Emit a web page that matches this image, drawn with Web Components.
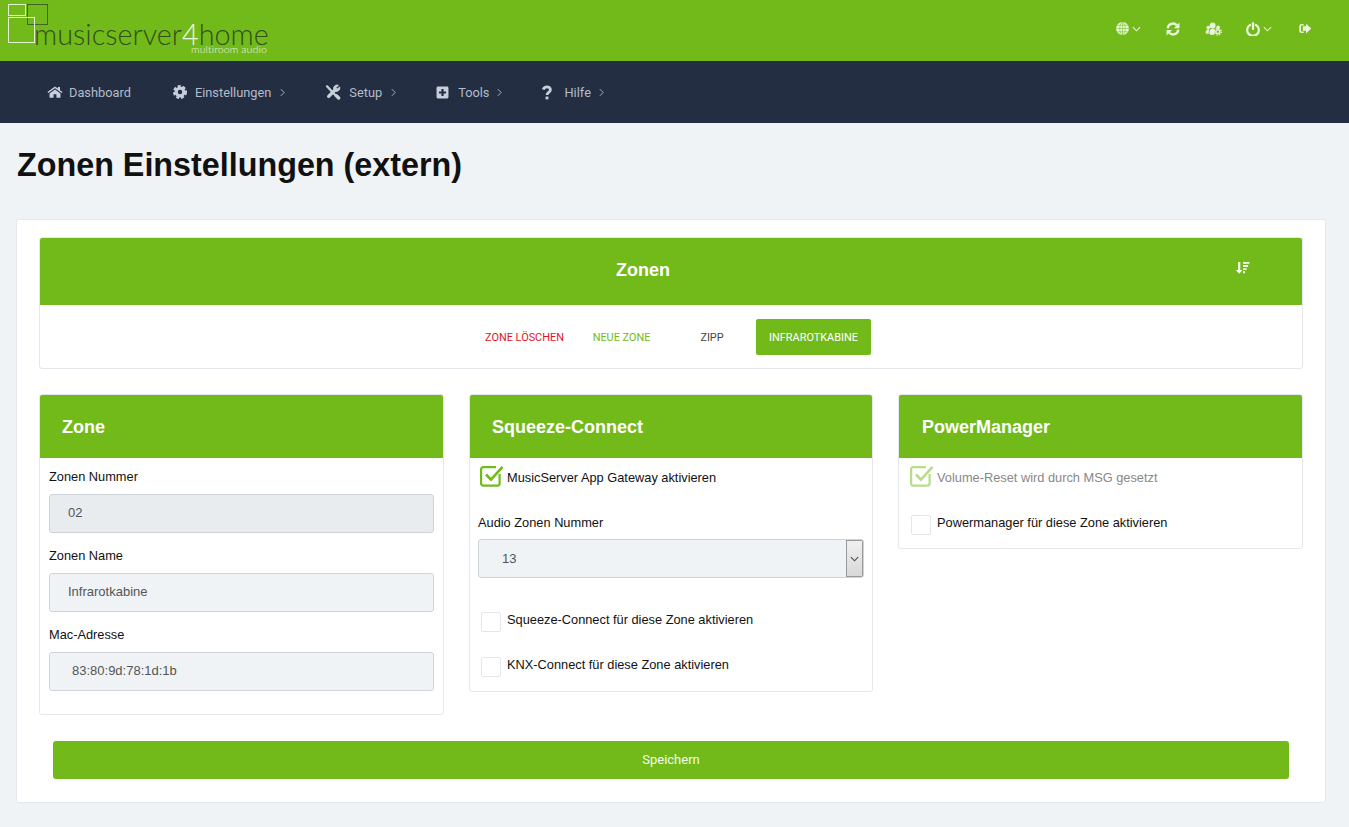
<!DOCTYPE html>
<html lang="de"><head><meta charset="utf-8"><title>Zonen Einstellungen</title>
<style>
html,body{margin:0;padding:0;background:#eff3f6;font-family:"Liberation Sans",Arial,sans-serif;color:#111}
.pad{display:block;padding:0 9px 23px}
</style></head><body>
<app-header></app-header>
<app-nav>
  <nav-item icon="home" label="Dashboard" plain></nav-item>
  <nav-item icon="cog" label="Einstellungen"></nav-item>
  <nav-item icon="tools" label="Setup" iw="24"></nav-item>
  <nav-item icon="plus" label="Tools" cm="8"></nav-item>
  <nav-item icon="help" label="Hilfe" cm="8"></nav-item>
</app-nav>
<page-title>Zonen Einstellungen (extern)</page-title>
<page-card>
  <zone-bar></zone-bar>
  <column-grid>
    <panel-box title="Zone">
      <div slot="body" class="pad">
      <form-field label="Zonen Nummer" value="02" tone="dark" indent="19"></form-field>
      <form-field label="Zonen Name" value="Infrarotkabine" indent="19"></form-field>
      <form-field label="Mac-Adresse" value="83:80:9d:78:1d:1b" indent="23"></form-field>
      </div>
    </panel-box>
    <panel-box title="Squeeze-Connect">
      <squeeze-body slot="body"></squeeze-body>
    </panel-box>
    <panel-box title="PowerManager" inset="23">
      <power-body slot="body"></power-body>
    </panel-box>
  </column-grid>
  <save-button>Speichern</save-button>
</page-card>
<script>
const ICONS={
home:'<svg viewBox="0 0 24 24" width="16" height="14" fill="currentColor" preserveAspectRatio="none"><path d="M12 2.500 .6 12.200l1.500 1.700L12 5.500l9.900 8.400 1.500-1.700-3.900-3.300V3.500h-3.300v2.600z"/><path d="M12 7.600 3.800 14.600V22h6v-6.200h4.400V22h6v-7.400z"/></svg>',
cog:'<svg viewBox="0 0 24 24" width="14" height="14" fill="none" stroke="currentColor"><circle cx="12" cy="12" r="6.600" stroke-width="5.400"/><circle cx="12" cy="12" r="10" stroke-width="4" stroke-dasharray="5.200 3.180"/></svg>',
tools:'<svg viewBox="0 0 24 24" width="16" height="16" fill="none" stroke="currentColor" stroke-linecap="round"><path d="M5.500 18.500 15 9" stroke-width="5"/><path d="M13 5.500a5 5 0 0 1 7-3.500l-3.500 3.500 2 2L22 4.500a5 5 0 0 1-7 6z" fill="currentColor" stroke-width="1.500"/><path d="M3 3.500 18.500 20" stroke-width="3.400"/><path d="M17 17.500l3.500 3.500" stroke-width="5"/></svg>',
plus:'<svg viewBox="0 0 24 24" width="13" height="13" fill="currentColor"><path fill-rule="evenodd" d="M3.500 1h17A2.500 2.500 0 0 1 23 3.500v17a2.500 2.500 0 0 1-2.500 2.500h-17A2.500 2.500 0 0 1 1 20.500v-17A2.500 2.500 0 0 1 3.500 1zM10 5.500V10H5.500v4H10v4.500h4V14h4.500v-4H14V5.500z"/></svg>',
help:'<svg viewBox="0 0 16 24" width="10" height="15" fill="none" stroke="currentColor" stroke-width="4.400"><path d="M2 7.500C3 4 5.500 2.800 8 2.800c3 0 5.500 1.800 5.500 4.700 0 4.500-5.500 4-5.500 8.500"/><path d="M8 18.500V23" stroke-width="4.600"/></svg>',
globe:'<svg viewBox="0 0 24 24" width="13" height="13"><circle cx="12" cy="12" r="11.800" fill="currentColor"/><g fill="none" stroke="#72ba1a" stroke-width="1"><ellipse cx="12" cy="12" rx="5" ry="11.500"/><path d="M12 .5v23M.5 12h23M2.500 6h19M2.500 18h19"/></g></svg>',
refresh:'<svg viewBox="0 0 24 24" width="14" height="14" fill="none" stroke="currentColor" stroke-width="4"><path d="M3 11a9 9 0 0 1 15.500-5.500"/><path d="M21 13a9 9 0 0 1-15.500 5.500"/><path d="M23 1v9.500H13.500z" fill="currentColor" stroke="none"/><path d="M1 23V13.500H10.500z" fill="currentColor" stroke="none"/></svg>',
users:'<svg viewBox="0 0 28 24" width="17" height="14" fill="currentColor"><circle cx="12.500" cy="6" r="5"/><circle cx="5" cy="9.500" r="3.200"/><circle cx="22" cy="9" r="3"/><path d="M.5 19c0-4 1.500-6 4.500-6 1 0 2 .5 2 .5C6 15 5.800 17 6 20H2c-1 0-1.500-.3-1.500-1z"/><path d="M7.500 21c-1-6 1-9.500 5-9.500 1.800 0 3.300.7 4.300 1.800L15 22H9c-1 0-1.500-.3-1.500-1z"/><circle cx="21.500" cy="16.500" r="3.400" fill="none" stroke="currentColor" stroke-width="2.600"/><circle cx="21.500" cy="16.500" r="6" fill="none" stroke="currentColor" stroke-width="2" stroke-dasharray="2.400 2.310"/></svg>',
power:'<svg viewBox="0 0 24 24" width="14" height="14" fill="none" stroke="currentColor" stroke-width="3.800" stroke-linecap="round"><path d="M7 5.200a10 10 0 1 0 10 0"/><path d="M12 2v10"/></svg>',
exit:'<svg viewBox="0 0 24 24" width="14" height="13" fill="currentColor"><path d="M9.500 3.500H5.500A4 4 0 0 0 1.500 7.500v9a4 4 0 0 0 4 4h4v-3h-4a1 1 0 0 1-1-1v-9a1 1 0 0 1 1-1h4z"/><path d="M14 3 23.500 12 14 21v-5H8V8h6z"/></svg>',
sort:'<svg viewBox="0 0 24 24" width="15" height="15" fill="currentColor"><path d="M5 3h3.400v13H12l-5.300 6L1.500 16H5z"/><path d="M13 3h10v3H13zM13 8h8v3h-8zM13 13h5.500v3H13zM13 18h3v3h-3z"/></svg>',
chevD:'<svg viewBox="0 0 10 6" width="9" height="6" fill="none" stroke="currentColor" stroke-width="1.200"><path d="M1 1l4 4 4-4"/></svg>',
chevR:'<svg viewBox="0 0 6 10" width="5" height="9" fill="none" stroke="currentColor" stroke-width="1.100"><path d="M1 1l4 4-4 4"/></svg>'
};
function comp(name,html){
  customElements.define(name,class extends HTMLElement{
    constructor(){super();this.attachShadow({mode:'open'});}
    connectedCallback(){this.shadowRoot.innerHTML=typeof html==='function'?html(this):html;}
  });
}
comp('brand-logo',`<style>
:host{display:block;position:relative;width:270px;height:61px;flex:none}
.b{position:absolute;box-sizing:border-box}
.w{font:300 28.8px/20px Lato,sans-serif;position:absolute;left:34px;top:24px;color:#31501a;white-space:nowrap}
.w b{font-weight:300;color:#eef7e2}
.s{font:300 10.6px/10px Lato,sans-serif;position:absolute;left:191px;top:44px;color:#eef7e2;white-space:nowrap;letter-spacing:.1px}
</style>
<div class="b" style="left:8px;top:4px;width:18px;height:12px;border:1px solid #e3f0d2"></div>
<div class="b" style="left:27px;top:4px;width:21px;height:21px;border:1px solid #44632a"></div>
<div class="b" style="left:8px;top:17px;width:27px;height:26px;border:1px solid #e3f0d2"></div>
<div class="w">musicserver<b>4</b>home</div>
<div class="s">multiroom audio</div>`);
comp('top-action',h=>`<style>
:host{display:inline-flex;align-items:center;gap:3px;color:#eaf5dc}
svg{display:block}
</style>${ICONS[h.getAttribute('icon')]}${h.hasAttribute('menu')?ICONS.chevD:''}`);
comp('app-header',`<style>
:host{display:flex;align-items:center;justify-content:space-between;height:61px;background:#72ba1a;box-sizing:border-box;padding-right:37px}
.a{display:flex;align-items:center;gap:25px;margin-top:-4px}
</style><brand-logo></brand-logo>
<div class="a"><top-action icon="globe" menu></top-action><top-action icon="refresh"></top-action><top-action icon="users" style="margin-right:-1px"></top-action><top-action icon="power" menu></top-action><top-action icon="exit" style="margin-left:1px"></top-action></div>`);
comp('app-nav',`<style>
:host{display:flex;align-items:center;height:62px;background:#242e42;box-sizing:border-box;padding-left:47px;gap:40px}
</style><slot></slot>`);
comp('nav-item',h=>`<style>
:host{display:inline-flex;align-items:center;color:#b2bccb;font:12.8px/20px Roboto,sans-serif;${h.hasAttribute('plain')?'margin-right:2px;':''}}
.i{width:${h.getAttribute('iw')||22}px;display:flex;align-items:center;color:#c6cfdb}
.l{padding-top:2px}
.c{margin-left:${h.getAttribute('cm')||9}px;display:flex}
svg{display:block}
</style><span class="i">${ICONS[h.getAttribute('icon')]}</span><span class="l">${h.getAttribute('label')}</span>${h.hasAttribute('plain')?'':`<span class="c">${ICONS.chevR}</span>`}`);
comp('page-title',`<style>
:host{display:block;padding:25px 17px 0;height:71px;box-sizing:border-box;font:bold 32.3px/34px "Liberation Sans",sans-serif;color:#111}
</style><slot></slot>`);
comp('page-card',`<style>
:host{display:block;margin:25px 23px 24px 16px;background:#fff;border:1px solid #e4e8ec;border-radius:3px;padding:17px 22px 23px}
</style><slot></slot>`);
comp('zone-bar',`<style>
:host{display:block;border:1px solid #e4e8ec;border-radius:3px;overflow:hidden}
.h{height:67px;box-sizing:border-box;padding:0 56px 4px 0;background:#72ba1a;color:#fff;position:relative;display:flex;align-items:center;justify-content:center;font:bold 18px/20px "Liberation Sans",sans-serif}
.s{position:absolute;left:1195px;top:21px;display:block}
.r{height:63px;display:flex;align-items:center;box-sizing:border-box;padding-left:432px;font:10.9px/14px Roboto,sans-serif}
.r span{display:flex;align-items:center;justify-content:center;height:36px;box-sizing:border-box;border-radius:2px;white-space:nowrap;padding-top:2px}
</style><div class="h">Zonen<span class="s">${ICONS.sort}</span></div>
<div class="r"><span style="color:#e2131e;width:105px">ZONE LÖSCHEN</span><span style="color:#72ba1a;width:89px">NEUE ZONE</span><span style="color:#444;width:91px;padding-left:1px">ZIPP</span><span style="background:#72ba1a;color:#fff;width:115px;margin-left:-1px">INFRAROTKABINE</span></div>`);
comp('column-grid',`<style>
:host{display:grid;grid-template-columns:405px 404px 405px;gap:25px;margin-top:25px;align-items:start}
</style><slot></slot>`);
comp('panel-box',h=>`<style>
:host{display:block;border:1px solid #e4e8ec;border-radius:3px;overflow:hidden;background:#fff}
.h{height:63px;background:#72ba1a;color:#fff;display:flex;align-items:center;padding-left:${h.getAttribute('inset')||22}px;font:bold 18px/20px "Liberation Sans",sans-serif}
</style><div class="h">${h.getAttribute('title')}</div><slot name="body"></slot>`);
comp('form-field',h=>`<style>
:host{display:block;padding-top:14px}
:host(:first-child){padding-top:10px}
label{display:block;font:12.8px/18px "Liberation Sans",sans-serif;color:#111;margin-bottom:8px}
.v{height:39px;box-sizing:border-box;border:1px solid #ced4da;border-radius:3px;background:${h.getAttribute('tone')==='dark'?'#e9ecef':'#eff3f6'};display:flex;align-items:center;padding:0 0 3px ${h.getAttribute('indent')-1}px;color:#555;font:13px "Liberation Sans",sans-serif}
</style><label>${h.getAttribute('label')}</label><div class="v">${h.getAttribute('value')}</div>`);
comp('check-row',h=>`<style>
:host{display:flex;align-items:center;font:12.8px/18px "Liberation Sans",sans-serif;color:${h.hasAttribute('muted')?'#888':'#111'};height:22px}
.b{width:29px;flex:none;display:flex;padding-left:2px;box-sizing:border-box}
.e{width:20px;height:20px;box-sizing:border-box;border:1px solid #e3e6ea;border-radius:2px;margin:6px 0 0 1px}
.t{padding-top:2px}
svg{display:block;overflow:visible}
</style><span class="b">${h.hasAttribute('checked')?`<svg width="24" height="22" viewBox="0 0 24 22" fill="none" opacity="${h.hasAttribute('muted')?'.5':'1'}" stroke="#72ba1a"><path d="M19.600 8v9.600a2 2 0 0 1-2 2H3.100a2 2 0 0 1-2-2V3.100a2 2 0 0 1 2-2H16" stroke-width="2.200"/><path d="M6 8.500l5 5.200L22.500 .8" stroke-width="2.600"/></svg>`:'<span class="e"></span>'}</span><span class="t">${h.textContent}</span>`);
comp('squeeze-body',`<style>
:host{display:block;padding:8px 8px 16px 8px}
label{display:block;font:12.8px/18px "Liberation Sans",sans-serif;color:#111;margin:26px 0 7px}
.s{height:39px;box-sizing:border-box;border:1px solid #ced4da;border-radius:3px;background:#eff3f6;display:flex;align-items:center;justify-content:space-between;padding-left:23px;font:13px "Liberation Sans",sans-serif;color:#555;margin-bottom:30px;overflow:hidden}
.ar{width:17px;height:37px;box-sizing:border-box;border:1px solid #999;background:linear-gradient(#f0f0f0,#d8d8d8);display:flex;align-items:center;justify-content:center;color:#444}
</style><check-row checked>MusicServer App Gateway aktivieren</check-row>
<label>Audio Zonen Nummer</label>
<div class="s">13<span class="ar">${ICONS.chevD}</span></div>
<check-row style="margin-bottom:23px">Squeeze-Connect für diese Zone aktivieren</check-row>
<check-row>KNX-Connect für diese Zone aktivieren</check-row>`);
comp('power-body',`<style>
:host{display:block;padding:8px 9px 15px 9px}
</style><check-row checked muted>Volume-Reset wird durch MSG gesetzt</check-row>
<check-row style="margin-top:23px">Powermanager für diese Zone aktivieren</check-row>`);
comp('save-button',`<style>
:host{display:flex;align-items:center;justify-content:center;height:38px;box-sizing:border-box;padding-bottom:2px;margin:26px 14px 0;background:#72ba1a;color:#f4fae9;border-radius:3px;font:13px Roboto,sans-serif}
</style><slot></slot>`);
</script>
</body></html>
